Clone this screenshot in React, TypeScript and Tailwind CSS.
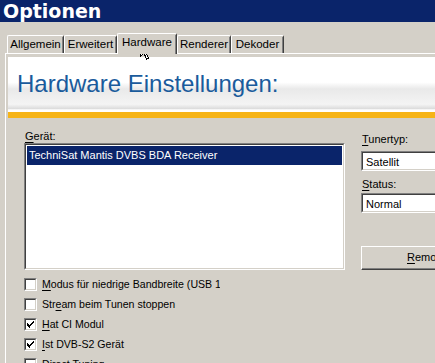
import React from "react";

const ui = "font-['Liberation_Sans',Arial,sans-serif] text-[11px] text-black";

const tabs = ["Allgemein", "Erweitert", "Hardware", "Renderer", "Dekoder"];
const tabWidths: Record<string, string> = {
  Allgemein: "w-[57px]",
  Erweitert: "w-[53px]",
  Hardware: "w-[60px]",
  Renderer: "w-[54px]",
  Dekoder: "w-[53px]",
};

const options = [
  { label: "Modus für niedrige Bandbreite (USB 1.1)", key: "M", checked: false },
  { label: "Stream beim Tunen stoppen", key: "e", checked: false },
  { label: "Hat CI Modul", key: "H", checked: true },
  { label: "Ist DVB-S2 Gerät", key: "I", checked: true },
  { label: "Direct Tuning", key: "D", checked: false },
];

function Mnemonic({ text, letter }: { text: string; letter: string }) {
  const i = text.indexOf(letter);
  if (i < 0) return <>{text}</>;
  return (
    <>
      {text.slice(0, i)}
      <span className="underline underline-offset-[2px]">{text[i]}</span>
      {text.slice(i + 1)}
    </>
  );
}

function Checkbox({ checked }: { checked: boolean }) {
  return (
    <span className="box-border flex h-[13px] w-[13px] shrink-0 items-center justify-center border border-t-[#808080] border-l-[#808080] border-r-white border-b-white">
      <span className="box-border flex h-[11px] w-[11px] items-center justify-center border border-t-[#404040] border-l-[#404040] border-r-[#d4d0c8] border-b-[#d4d0c8] bg-white">
        {checked ? (
          <svg width="7" height="7" viewBox="0 0 7 7" shapeRendering="crispEdges">
            <path d="M0 2h1v1H0zM0 3h2v1H0zM0 4h3v1H0zM1 5h2v1H1zM2 6h1v1H2zM3 3h1v2H3zM4 2h1v2H4zM5 1h1v2H5zM6 0h1v2H6zM1 3h1v2H1zM2 4h1v2H2z" fill="#000" />
          </svg>
        ) : null}
      </span>
    </span>
  );
}

function Sunken({ className, children }: { className?: string; children?: React.ReactNode }) {
  return (
    <div className={`box-border border border-t-[#808080] border-l-[#808080] border-r-white border-b-white ${className ?? ""}`}>
      <div className="box-border h-full w-full border border-t-[#404040] border-l-[#404040] border-r-[#d4d0c8] border-b-[#d4d0c8] bg-white">
        {children}
      </div>
    </div>
  );
}

export default function App() {
  return (
    <div className={`relative h-[363px] w-[435px] overflow-hidden bg-[#d4d0c8] ${ui}`}>
      {/* title bar */}
      <div className="flex h-[22px] items-center bg-[#0a246a] pl-[3px] font-['DejaVu_Sans',sans-serif] text-[19px] leading-none font-bold text-white">
        Optionen
      </div>

      {/* tab strip */}
      <div className="flex h-[31px] items-end pl-[7px] text-[11.5px]">
        {tabs.map((t) => {
          const active = t === "Hardware";
          return (
            <div
              key={t}
              className={`relative box-border flex items-center justify-center rounded-t-[2px] border-t border-l border-r border-t-white border-l-white border-r-[#404040] bg-[#d4d0c8] ${tabWidths[t]} ${
                active ? "z-10 -mb-[1px] h-[21px] pb-[2px]" : "h-[18px]"
              }`}
            >
              <span className="pointer-events-none absolute top-[1px] right-0 bottom-0 w-px bg-[#808080]" />
              {t}
            </div>
          );
        })}
      </div>

      {/* panel */}
      <div className="ml-[5px] h-[310px] border-t border-l border-t-white border-l-white pt-[3px] pl-[2px]">
        <div className="h-[55px] bg-[linear-gradient(to_bottom,#ffffff_0%,#ffffff_46%,#e9e9e9_58%,#f4f4f4_86%,#dcdcdc_94%,#ffffff_96%,#ffffff_100%)] pt-[13px] pl-[9px] text-[24px] leading-[28px] text-[#1a5b9c]">
          Hardware Einstellungen:
        </div>
        <div className="h-[6px] bg-[#f6b418]" />

        <div className="flex pt-[11px] pl-[16px]">
          {/* left column */}
          <div className="flex w-[321px] flex-col">
            <div className="h-[14px] pl-[1px] leading-[14px]">
              <Mnemonic text="Gerät:" letter="G" />
            </div>
            <Sunken className="h-[127px] w-[321px]">
              <div className="mx-[1px] mt-[1px] flex h-[19px] items-end bg-[#0a246a] pb-[2px] pl-[2px] text-white">
                TechniSat Mantis DVBS BDA Receiver
              </div>
            </Sunken>
            <div className="mt-[4px] flex flex-col text-[10.6px]">
              {options.map((o) => (
                <div key={o.label} className="flex h-[20px] w-[196px] items-center gap-[5px] overflow-hidden whitespace-nowrap">
                  <Checkbox checked={o.checked} />
                  <span className="pt-[1px]">
                    <Mnemonic text={o.label} letter={o.key} />
                  </span>
                </div>
              ))}
            </div>
          </div>

          {/* right column */}
          <div className="ml-[16px] flex w-[120px] flex-col">
            <div className="mt-[3px] h-[14px] pl-[1px] leading-[14px]">
              <Mnemonic text="Tunertyp:" letter="T" />
            </div>
            <Sunken className="mt-[5px] h-[20px] w-[120px]">
              <div className="pt-[2px] pl-[3px] leading-[14px]">Satellit</div>
            </Sunken>
            <div className="mt-[6px] h-[14px] pl-[1px] leading-[14px]">
              <Mnemonic text="Status:" letter="S" />
            </div>
            <Sunken className="mt-[2px] h-[20px] w-[120px]">
              <div className="pt-[2px] pl-[3px] leading-[14px]">Normal</div>
            </Sunken>
            <div className="mt-[33px] box-border h-[24px] w-[120px] border border-t-white border-l-white border-r-[#404040] border-b-[#404040]">
              <div className="box-border flex h-full w-full items-center border-r border-b border-r-[#808080] border-b-[#808080] pl-[45px]">
                <Mnemonic text="Remove" letter="R" />
              </div>
            </div>
          </div>
        </div>
      </div>

      {/* mouse cursor */}
      <svg className="absolute top-[41px] left-[140px]" width="12" height="19" viewBox="0 0 12 19" shapeRendering="crispEdges">
        <path d="M0.5 0.5 L0.5 15.5 L4 12 L6.5 18 L8.5 17 L6 11.5 L11 11.5 Z" fill="#fff" stroke="#000" strokeWidth="1" />
      </svg>
    </div>
  );
}
